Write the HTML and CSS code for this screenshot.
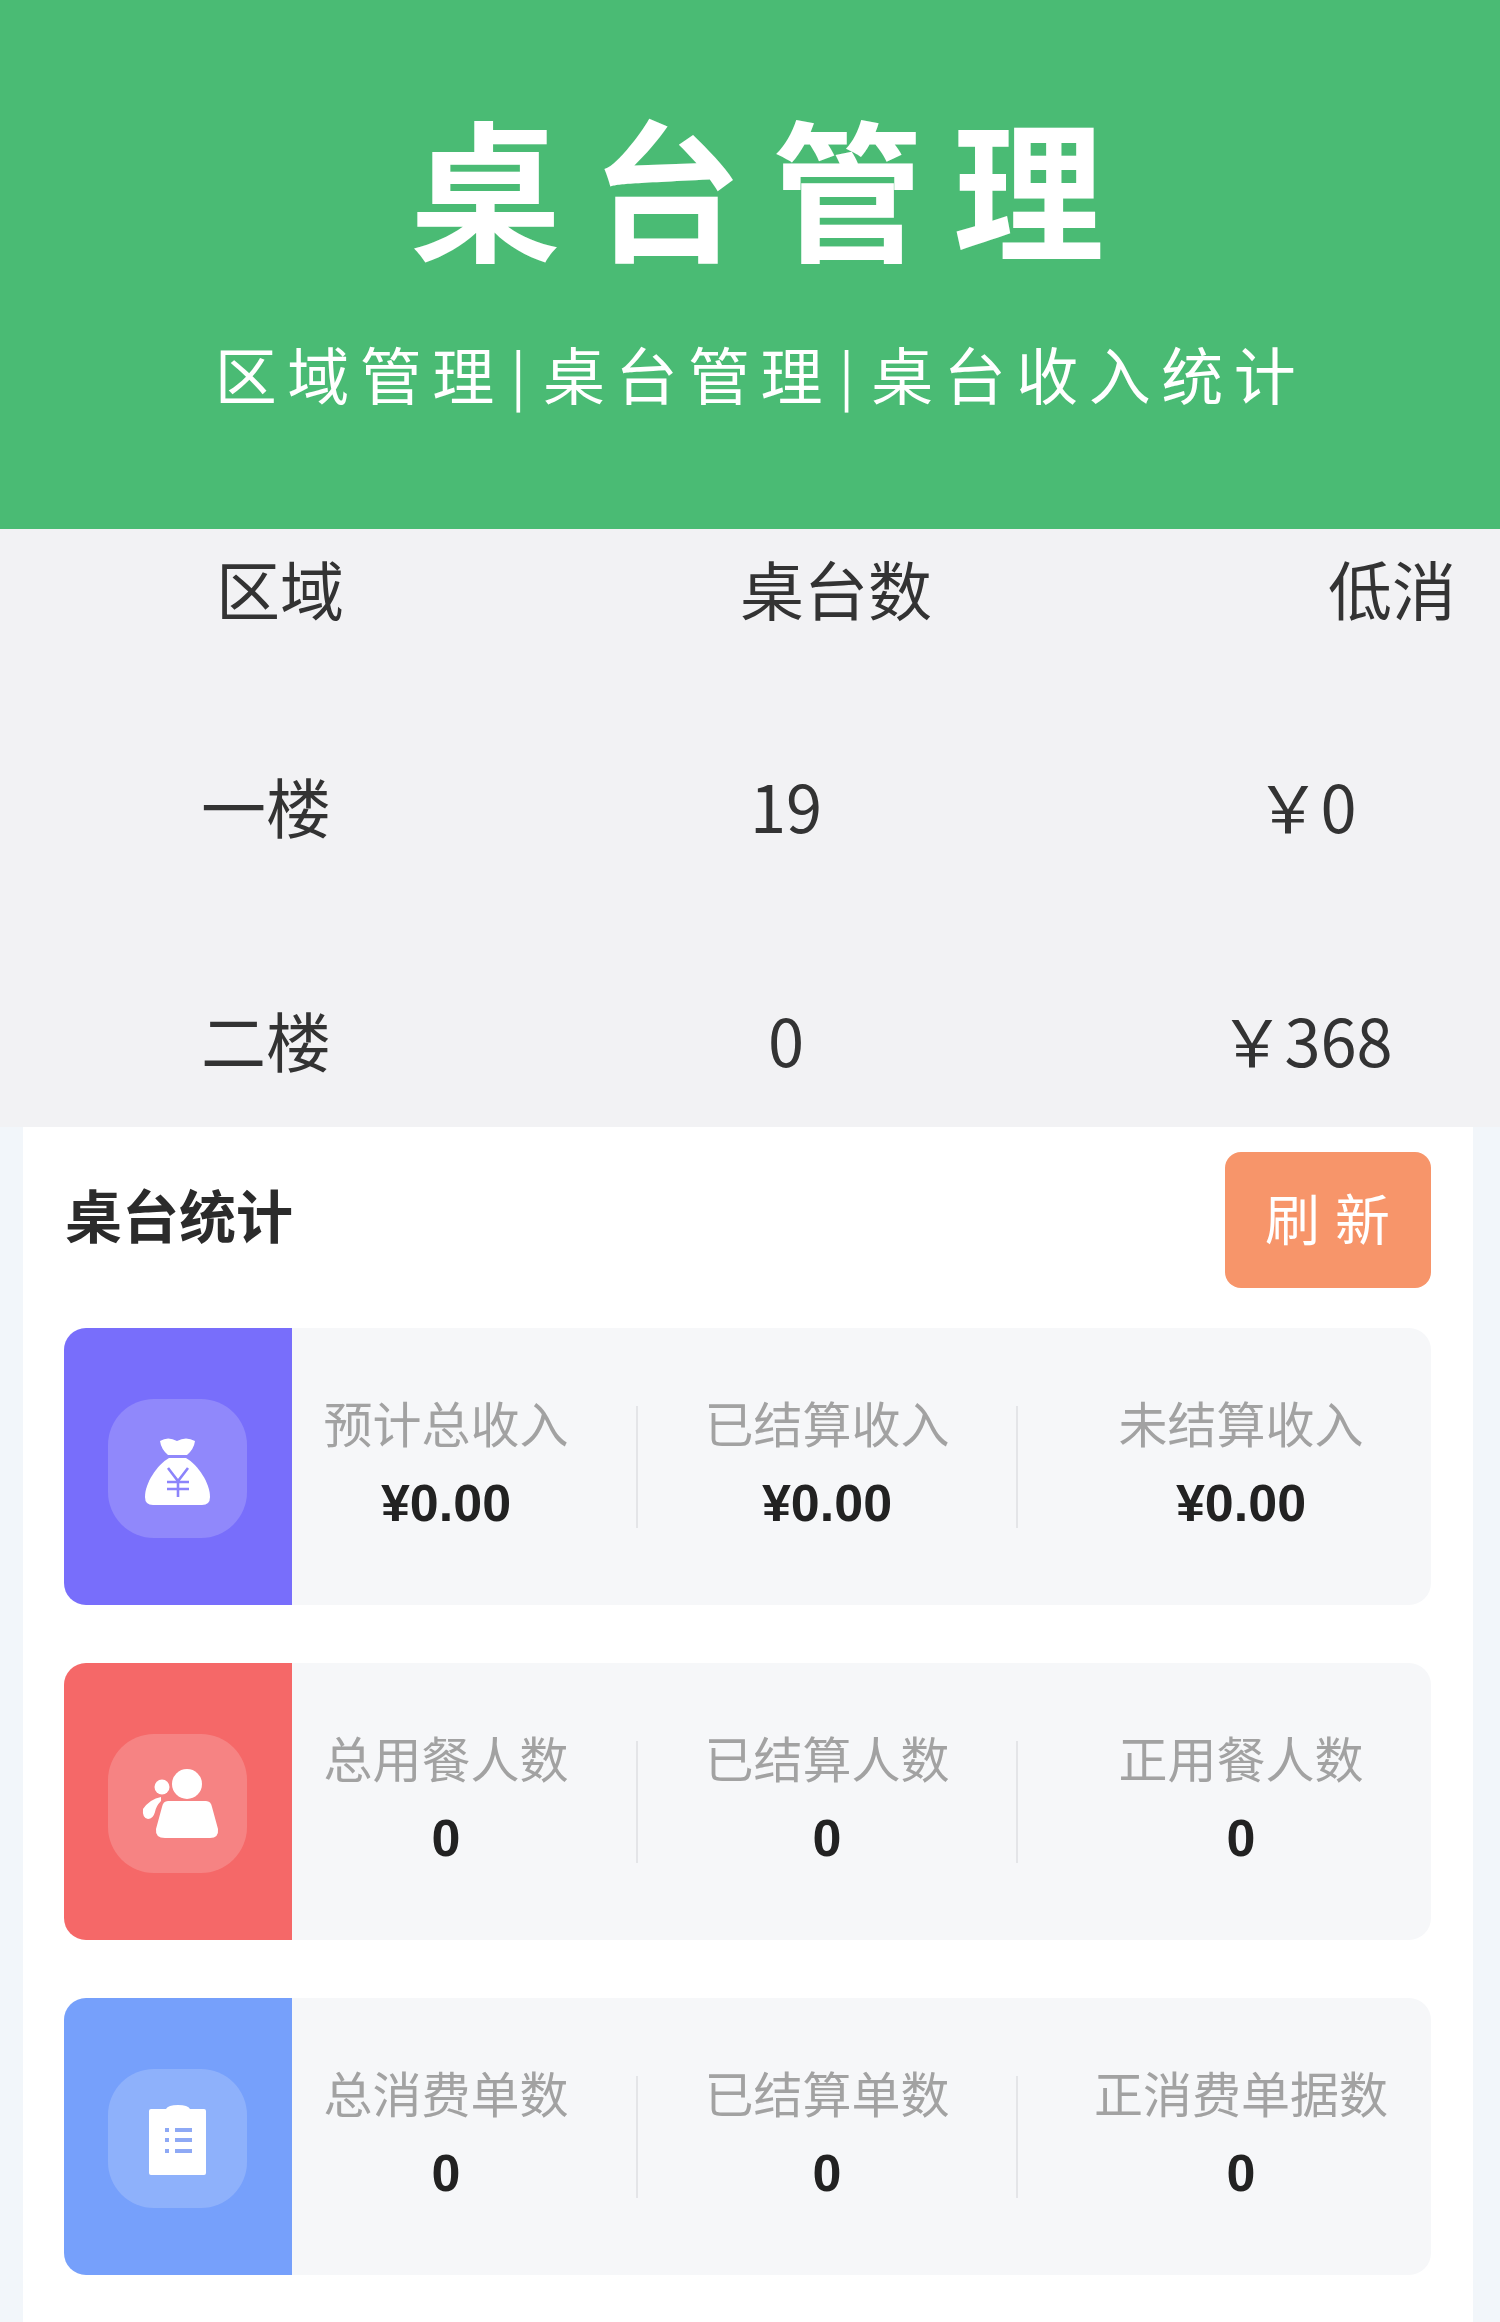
FILE: index.html
```html
<!DOCTYPE html>
<html lang="zh">
<head>
  <meta charset="UTF-8">
  <meta name="viewport" content="width=device-width, initial-scale=1">
  <title>桌台管理</title>
  <link rel="stylesheet" href="styles.css">
</head>
<body>
  <!-- 顶部标题 -->
  <header class="banner">
    <h1>桌台管理</h1>
    <p class="subtitle">区域管理<span class="sep">|</span>桌台管理<span class="sep">|</span>桌台收入统计</p>
  </header>

  <!-- 区域表 -->
  <section class="area-table">
    <div class="area-head">
      <span>区域</span>
      <span>桌台数</span>
      <span>低消</span>
    </div>
    <div class="area-row">
      <span>一楼</span>
      <span>19</span>
      <span>￥0</span>
    </div>
    <div class="area-row">
      <span>二楼</span>
      <span>0</span>
      <span>￥368</span>
    </div>
  </section>

  <main class="panel">
    <div class="panel-head">
      <h2>桌台统计</h2>
      <button type="button" class="refresh">刷新</button>
    </div>

    <div class="stat-card">
      <div class="stat-side purple">
        <div class="icon-box">
          <svg viewBox="0 0 139 139" width="139" height="139">
            <path fill="#fff" d="M52 42Q60 37 69 42Q78 37 87 42Q86 50 79 56H60Q53 50 52 42Z"/>
            <path fill="#fff" d="M61 59H78C90 66 102 84 102 98Q102 106 94 106H45Q37 106 37 98C37 84 49 66 61 59Z"/>
            <path fill="none" stroke="#8c84fb" stroke-width="2.6" d="M60 69L70 82L80 69M59 83H81M59 90H81M70 82V98"/>
          </svg>
        </div>
      </div>
      <div class="stat-cols">
        <div class="stat-col"><span class="label">预计总收入</span><strong>¥0.00</strong></div>
        <div class="stat-col"><span class="label">已结算收入</span><strong>¥0.00</strong></div>
        <div class="stat-col"><span class="label">未结算收入</span><strong>¥0.00</strong></div>
      </div>
    </div>

    <div class="stat-card">
      <div class="stat-side red">
        <div class="icon-box">
          <svg viewBox="0 0 139 139" width="139" height="139">
            <circle fill="#fff" cx="79" cy="50" r="15"/>
            <circle fill="#fff" cx="54" cy="53" r="7.5"/>
            <path fill="#fff" d="M60 67H98Q103 67 104 73L110 95Q111 104 102 104H57Q47 104 48 95L54 73Q55 67 60 67Z"/>
            <path fill="#fff" d="M53 63Q42 65 35 75Q34 84 40 85Q45 85 47 78Q48 72 53 67Z"/>
          </svg>
        </div>
      </div>
      <div class="stat-cols">
        <div class="stat-col"><span class="label">总用餐人数</span><strong>0</strong></div>
        <div class="stat-col"><span class="label">已结算人数</span><strong>0</strong></div>
        <div class="stat-col"><span class="label">正用餐人数</span><strong>0</strong></div>
      </div>
    </div>

    <div class="stat-card">
      <div class="stat-side blue">
        <div class="icon-box">
          <svg viewBox="0 0 139 139" width="139" height="139">
            <path fill="#fff" d="M43 40H58Q60 36 70 36Q80 36 82 40H96Q98 40 98 42V104Q98 106 96 106H43Q41 106 41 104V42Q41 40 43 40Z"/>
            <path fill="none" stroke="#8ea9f5" stroke-width="4" d="M57 61H61M67 61H84M57 71H61M67 71H84M57 82H61M67 82H84"/>
          </svg>
        </div>
      </div>
      <div class="stat-cols">
        <div class="stat-col"><span class="label">总消费单数</span><strong>0</strong></div>
        <div class="stat-col"><span class="label">已结算单数</span><strong>0</strong></div>
        <div class="stat-col"><span class="label">正消费单据数</span><strong>0</strong></div>
      </div>
    </div>
  </main>
</body>
</html>
```

FILE: styles.css
```css
* {
  box-sizing: border-box;
}
body {
  margin: 0;
  min-height: 2322px;
  background-color: #f2f6fa;
  font-family: "Noto Sans CJK SC", "Noto Sans", sans-serif;
  overflow: hidden;
}
.banner {
  height: 529px;
  background-color: #4abb74;
  color: #fff;
  text-align: center;
  padding-top: 77px;
}
.banner h1 {
  margin: 0;
  padding-left: 44px;
  font-size: 151px;
  line-height: 214px;
  letter-spacing: 30px;
  font-weight: 700;
}
.subtitle {
  margin: 0;
  padding: 0 0 0 21px;
  margin-top: 49px;
  font-size: 62px;
  line-height: 66px;
  letter-spacing: 10.5px;
  font-weight: 400;
}
.sep {
  margin: 0 17px 0 6px;
  font-size: 56px;
  letter-spacing: 0;
  vertical-align: 3px;
}
.area-table {
  height: 598px;
  background-color: #f2f2f4;
  color: #333;
  overflow: hidden;
}
.area-head {
  display: grid;
  grid-template-columns: repeat(3, 556px);
  padding: 14px 0 0 2px;
  margin-bottom: 130px;
  font-size: 64px;
  line-height: 88px;
  text-align: center;
}
.area-row {
  display: grid;
  grid-template-columns: repeat(3, 520px);
  padding-left: 6px;
  margin-bottom: 146px;
  font-size: 65px;
  line-height: 88px;
  text-align: center;
}
.panel {
  margin: 0 27px 0 23px;
  min-height: 1195px;
  background-color: #fff;
  padding: 25px 42px 0 41px;
}
.panel-head {
  display: flex;
  justify-content: space-between;
  align-items: center;
  height: 136px;
  margin-bottom: 40px;
  padding-left: 1px;
}
.panel-head h2 {
  margin: -14px 0 0;
  font-size: 57px;
  font-weight: 700;
  color: #2b2b2b;
}
.refresh {
  width: 206px;
  height: 136px;
  padding: 0 0 8px 14px;
  border: none;
  border-radius: 16px;
  background-color: #f7956a;
  color: #fff;
  font-family: inherit;
  font-size: 55px;
  font-weight: 400;
  letter-spacing: 15px;
}
.stat-card {
  display: flex;
  height: 277px;
  margin-bottom: 58px;
  border-radius: 22px;
  background-color: #f6f7f9;
  overflow: hidden;
}
.stat-side {
  flex: 0 0 228px;
  display: flex;
  align-items: center;
  justify-content: center;
}
.purple {
  background-color: #786efb;
}
.red {
  background-color: #f56868;
}
.blue {
  background-color: #76a0fb;
}
.icon-box {
  width: 139px;
  height: 139px;
  margin-top: 3px;
  margin-left: -2px;
  border-radius: 46px;
  background-color: rgba(255, 255, 255, 0.18);
}
.icon-box svg {
  display: block;
}
.stat-cols {
  flex: 1;
  display: grid;
  grid-template-columns: 346px 380px 1fr;
  align-items: center;
}
.stat-col {
  display: flex;
  flex-direction: column;
  align-items: center;
  height: 122px;
  justify-content: center;
  border-right: 2px solid #e4e5e8;
}
.stat-col:first-child {
  padding-right: 36px;
}
.stat-col:last-child {
  border-right: none;
  padding-left: 33px;
}
.label {
  margin-top: -14px;
  font-size: 49px;
  line-height: 66px;
  font-weight: 400;
  color: #a2a2a2;
  white-space: nowrap;
}
.stat-col strong {
  margin-top: 20px;
  font-family: "Liberation Sans", "Noto Sans CJK SC", sans-serif;
  font-size: 52px;
  line-height: 56px;
  font-weight: 700;
  color: #222;
}
```
